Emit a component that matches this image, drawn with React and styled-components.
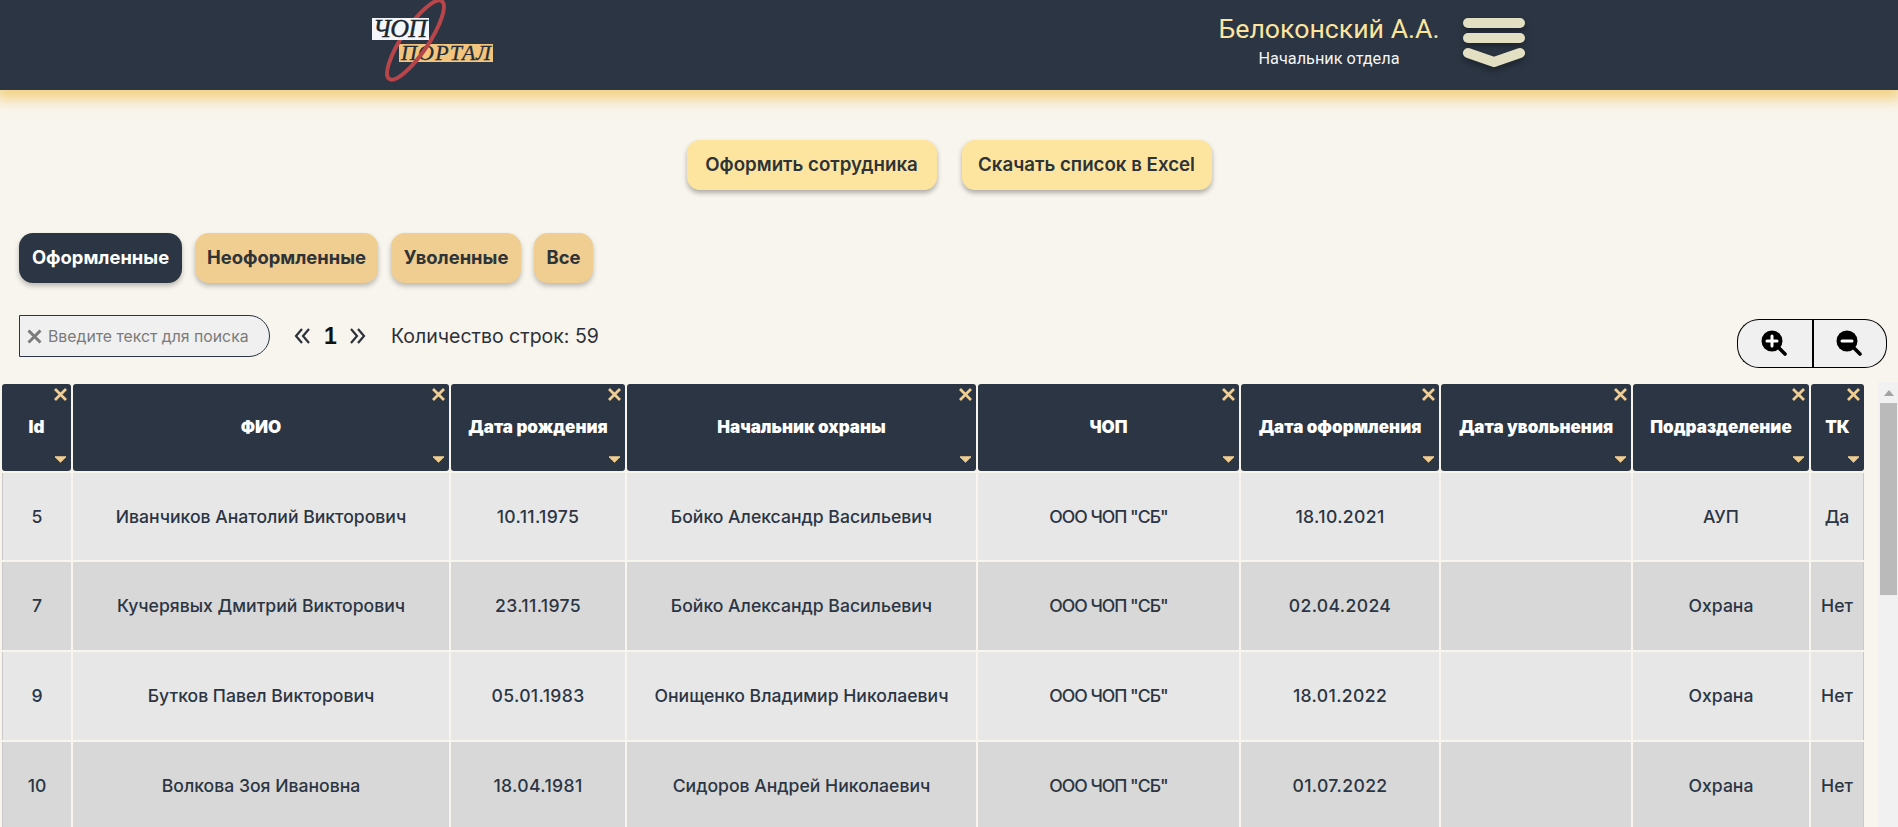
import React from "react";
import styled, { createGlobalStyle } from "styled-components";

const Global = createGlobalStyle`
  html, body { margin: 0; padding: 0; height: 100%; overflow: hidden; background: #f8f5ee; }
  body { font-family: Inter, "Noto Sans", sans-serif; color: #2b3543; }
  * { box-sizing: border-box; }
`;

const Page = styled.div`
  height: 827px;
  overflow: hidden;
`;

const TopBar = styled.header`
  height: 90px;
  background: #2b3543;
  display: flex;
  align-items: flex-start;
  box-shadow: 0 6px 12px 4px #f3d48a;
  position: relative;
  z-index: 2;
`;

const Logo = styled.svg`
  display: block;
  width: 140px;
  height: 84px;
  margin-left: 365px;
  flex: none;
`;

const UserBlock = styled.div`
  width: 240px;
  margin-left: 704px;
  padding-top: 13px;
  text-align: center;
  flex: none;
`;

const UserName = styled.div`
  font-family: Roboto, sans-serif;
  font-size: 26.7px;
  line-height: 32px;
  color: #fde5a0;
`;

const UserRole = styled.div`
  font-family: Roboto, sans-serif;
  font-size: 16.3px;
  line-height: 20px;
  margin-top: 4px;
  color: #f4f4f4;
`;

const Burger = styled.svg`
  display: block;
  width: 62px;
  height: 52px;
  margin: 17px 0 0 14px;
  flex: none;
  overflow: visible;
  filter: drop-shadow(0 3px 3px rgba(0, 0, 0, 0.35));
`;

const Actions = styled.div`
  display: flex;
  justify-content: center;
  gap: 25px;
  margin-top: 50px;
`;

const ActionButton = styled.button`
  height: 50px;
  width: ${(p) => p.$w}px;
  padding: 0 0 2px;
  border: 0;
  border-radius: 13px;
  background: #fde5a0;
  color: #2e3338;
  font: 600 18.7px Inter, sans-serif;
  box-shadow: 0 3px 5px rgba(0, 0, 0, 0.3);
`;

const Tabs = styled.nav`
  display: flex;
  gap: 13px;
  margin: 43px 0 0 19px;
`;

const Tab = styled.button`
  height: 50px;
  width: ${(p) => p.$w}px;
  padding: 0 0 2px;
  border: 0;
  border-radius: 14px;
  background: ${(p) => (p.$active ? "#2b3543" : "#f0cd90")};
  color: ${(p) => (p.$active ? "#fff" : "#2e3338")};
  font: 700 18.4px Inter, sans-serif;
  box-shadow: 0 3px 5px rgba(0, 0, 0, 0.25);
`;

const Toolbar = styled.div`
  display: flex;
  align-items: flex-start;
  margin: 32px 11px 0 19px;
`;

const Search = styled.label`
  width: 251px;
  height: 42px;
  flex: none;
  display: flex;
  align-items: center;
  gap: 6px;
  padding-left: 7px;
  background: #f0f0f0;
  border: 1px solid #2b3543;
  border-radius: 0 24px 24px 0;
  color: #7b7b7b;
`;

const SearchInput = styled.input`
  width: 210px;
  border: 0;
  outline: 0;
  padding: 0;
  background: transparent;
  font: 400 15.8px Inter, sans-serif;
  &::placeholder { color: #7b7b7b; opacity: 1; }
`;

const Pager = styled.div`
  display: flex;
  align-items: center;
  height: 42px;
  margin-left: 24px;
  gap: 13px;
  color: #2b3039;
`;

const PageNumber = styled.span`
  font: 700 23px "Liberation Sans", sans-serif;
  color: #111;
  width: 12px;
  text-align: center;
`;

const Count = styled.div`
  height: 42px;
  line-height: 42px;
  margin-left: 25px;
  font-size: 19.5px;
  color: #2b3039;
`;

const ZoomGroup = styled.div`
  margin: 4px 0 0 auto;
  display: flex;
`;

const ZoomButton = styled.button`
  width: 75px;
  height: 49px;
  padding: 0 2px 1px 0;
  display: flex;
  align-items: center;
  justify-content: center;
  background: #f0f0f0;
  border: 1.5px solid #000;
  border-left-width: ${(p) => (p.$side === "left" ? "1.5px" : "2px")};
  border-right-width: ${(p) => (p.$side === "left" ? "0" : "1.5px")};
  border-radius: ${(p) => (p.$side === "left" ? "22px 0 0 22px" : "0 22px 22px 0")};
`;

const TableArea = styled.div`
  margin-top: 14px;
  height: 445px;
  display: flex;
  justify-content: space-between;
  overflow: hidden;
`;

const Table = styled.table`
  table-layout: fixed;
  width: 1866px;
  flex: none;
  align-self: flex-start;
  border-collapse: separate;
  border-spacing: 2px;
`;

const ScrollRail = styled.div`
  width: 20px;
  flex: none;
  background: #f1f1f1;
  padding: 0 1px 0 2px;
`;

const ScrollUp = styled.div`
  height: 21px;
  display: flex;
  align-items: center;
  justify-content: center;
  &::before {
    content: "";
    border: solid transparent;
    border-width: 0 5px 6px;
    border-bottom-color: #a3a3a3;
  }
`;

const ScrollThumb = styled.div`
  height: 192px;
  background: #bababa;
`;

const HeadCell = styled.th`
  position: relative;
  height: 87px;
  padding: 0 0 2px;
  background: #2b3543;
  border-radius: 3px;
  color: #fff;
  font-size: 17px;
  font-weight: 900;
  text-align: center;
`;

const CloseMark = styled.svg`
  position: absolute;
  top: 4px;
  right: 4px;
  width: 13px;
  height: 13px;
`;

const SortMark = styled.svg`
  position: absolute;
  bottom: 8px;
  right: 4px;
  width: 13px;
  height: 7px;
`;

const Row = styled.tr`
  &:first-child td { height: 87px; }
`;

const Cell = styled.td`
  height: 88px;
  padding: 0 0 1px;
  text-align: center;
  background: ${(p) => (p.$alt ? "#d8d8d8" : "#e7e7e7")};
  color: #2b3543;
  font-size: 17.6px;
  font-weight: 500;
  letter-spacing: ${(p) => p.$spacing || 0}px;
  &:first-child { border-left: 1px solid #c9c9c9; }
  &:last-child { border-right: 1px solid #c9c9c9; }
`;

const columns = [
  { name: "Id", width: 69 },
  { name: "ФИО", width: 376 },
  { name: "Дата рождения", width: 174, spacing: 0.35 },
  { name: "Начальник охраны", width: 349 },
  { name: "ЧОП", width: 261, spacing: -1 },
  { name: "Дата оформления", width: 198, spacing: 0.35 },
  { name: "Дата увольнения", width: 190 },
  { name: "Подразделение", width: 176 },
  { name: "ТК", width: 53 },
];

const rows = [
  ["5", "Иванчиков Анатолий Викторович", "10.11.1975", "Бойко Александр Васильевич", 'ООО ЧОП "СБ"', "18.10.2021", "", "АУП", "Да"],
  ["7", "Кучерявых Дмитрий Викторович", "23.11.1975", "Бойко Александр Васильевич", 'ООО ЧОП "СБ"', "02.04.2024", "", "Охрана", "Нет"],
  ["9", "Бутков Павел Викторович", "05.01.1983", "Онищенко Владимир Николаевич", 'ООО ЧОП "СБ"', "18.01.2022", "", "Охрана", "Нет"],
  ["10", "Волкова Зоя Ивановна", "18.04.1981", "Сидоров Андрей Николаевич", 'ООО ЧОП "СБ"', "01.07.2022", "", "Охрана", "Нет"],
];

function Chevrons({ flip }) {
  return (
    <svg width="17" height="18" viewBox="0 0 17 18" fill="none" stroke="currentColor" strokeWidth="2.2" style={flip ? { transform: "scaleX(-1)" } : undefined}>
      <path d="M8 2 2 9l6 7M15 2 9 9l6 7" />
    </svg>
  );
}

function ZoomIcon({ plus }) {
  return (
    <svg width="26" height="26" viewBox="0 0 26 26">
      <path d="M16 16 24 24" stroke="#000" strokeWidth="3.6" strokeLinecap="round" />
      <circle cx="11" cy="11" r="10.5" fill="#000" />
      <path d={plus ? "M11 6v10M6 11h10" : "M6 11h10"} stroke="#fff" strokeWidth="3" strokeLinecap="round" />
    </svg>
  );
}

export default function App() {
  return (
    <Page>
      <Global />
      <TopBar>
        <Logo viewBox="365 0 140 84">
          <rect x="399" y="44" width="94" height="18" fill="#f2c47d" />
          <text x="401" y="60" fontFamily="Liberation Serif, serif" fontStyle="italic" fontSize="22" fill="#232d38" stroke="#232d38" strokeWidth="0.3" textLength="90">ПОРТАЛ</text>
          <ellipse cx="415.5" cy="40" rx="13" ry="47" transform="rotate(34 415.5 40)" fill="none" stroke="#b8454a" strokeWidth="4" />
          <rect x="372" y="18" width="57" height="22" fill="#f4f6fa" />
          <text x="373" y="37" fontFamily="Liberation Serif, serif" fontStyle="italic" fontSize="26" fill="#1d2730" stroke="#1d2730" strokeWidth="0.4" textLength="54">ЧОП</text>
        </Logo>
        <UserBlock>
          <UserName>Белоконский А.А.</UserName>
          <UserRole>Начальник отдела</UserRole>
        </UserBlock>
        <Burger viewBox="0 0 62 52">
          <rect x="0" y="1" width="62" height="10" rx="5" fill="#e3dfc3" />
          <rect x="0" y="16" width="62" height="10" rx="5" fill="#e3dfc3" />
          <path d="M5 36 31 45 57 36" fill="none" stroke="#e3dfc3" strokeWidth="10" strokeLinecap="round" strokeLinejoin="round" />
        </Burger>
      </TopBar>

      <Actions>
        <ActionButton $w={250}>Оформить сотрудника</ActionButton>
        <ActionButton $w={250}>Скачать список в Excel</ActionButton>
      </Actions>

      <Tabs>
        <Tab $w={163} $active>Оформленные</Tab>
        <Tab $w={183}>Неоформленные</Tab>
        <Tab $w={130}>Уволенные</Tab>
        <Tab $w={59}>Все</Tab>
      </Tabs>

      <Toolbar>
        <Search>
          <svg width="15" height="15" viewBox="0 0 15 15" stroke="#7b7b7b" strokeWidth="3" style={{ flex: "none" }}>
            <path d="M1.5 1.5 13.5 13.5M13.5 1.5 1.5 13.5" />
          </svg>
          <SearchInput placeholder="Введите текст для поиска" />
        </Search>
        <Pager>
          <Chevrons />
          <PageNumber>1</PageNumber>
          <Chevrons flip />
        </Pager>
        <Count>Количество строк: 59</Count>
        <ZoomGroup>
          <ZoomButton $side="left" aria-label="Увеличить"><ZoomIcon plus /></ZoomButton>
          <ZoomButton $side="right" aria-label="Уменьшить"><ZoomIcon /></ZoomButton>
        </ZoomGroup>
      </Toolbar>

      <TableArea>
        <Table>
          <colgroup>
            {columns.map((column) => (
              <col key={column.name} width={column.width} />
            ))}
          </colgroup>
          <thead>
            <tr>
              {columns.map((column) => (
                <HeadCell key={column.name}>
                  {column.name}
                  <CloseMark viewBox="0 0 13 13" stroke="#f0cd90" strokeWidth="2.8">
                    <path d="M1 1 12 12M12 1 1 12" />
                  </CloseMark>
                  <SortMark viewBox="0 0 13 7" fill="#f0cd90" stroke="#f0cd90" strokeWidth="1" strokeLinejoin="round">
                    <path d="M1 .8h11L6.5 6.2z" />
                  </SortMark>
                </HeadCell>
              ))}
            </tr>
          </thead>
          <tbody>
            {rows.map((row, r) => (
              <Row key={row[0]}>
                {row.map((value, c) => (
                  <Cell key={c} $alt={r % 2 === 1} $spacing={columns[c].spacing}>{value}</Cell>
                ))}
              </Row>
            ))}
          </tbody>
        </Table>
        <ScrollRail>
          <ScrollUp />
          <ScrollThumb />
        </ScrollRail>
      </TableArea>
    </Page>
  );
}
